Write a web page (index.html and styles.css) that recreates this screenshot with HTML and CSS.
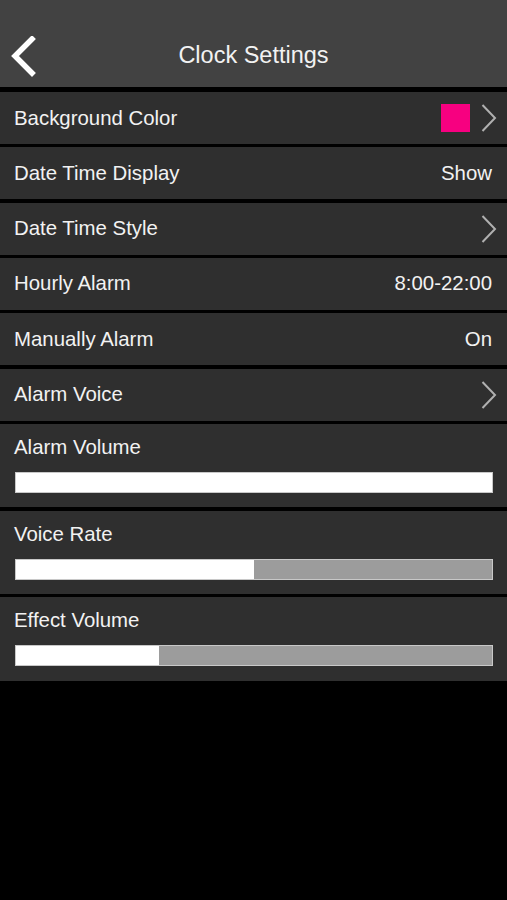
FILE: index.html
```html
<!DOCTYPE html>
<html lang="en">

<head>
  <meta charset="UTF-8" />
  <title>Clock Settings</title>

  <link rel="stylesheet" href="styles.css">
</head>

<body>
  <div class="header">
    <span class="back">
      <svg width="30" height="42" viewBox="0 0 30 42">
        <path d="M22 3 L5 20 L22 37" fill="none" stroke="#fff" stroke-width="5.5" stroke-linecap="square" />
      </svg>
    </span>
    <h1>Clock Settings</h1>
  </div>

  <div class="list">
    <div class="row">
      <span class="label">Background Color</span>
      <span class="swatch"></span>
      <svg class="chev" width="16" height="28" viewBox="0 0 16 28"><path d="M1.5 1 L14 14 L1.5 27" fill="none" stroke="#b0b0b0" stroke-width="2" /></svg>
    </div>
    <div class="row">
      <span class="label">Date Time Display</span>
      <span class="value">Show</span>
    </div>
    <div class="row">
      <span class="label">Date Time Style</span>
      <svg class="chev" width="16" height="28" viewBox="0 0 16 28"><path d="M1.5 1 L14 14 L1.5 27" fill="none" stroke="#b0b0b0" stroke-width="2" /></svg>
    </div>
    <div class="row">
      <span class="label">Hourly Alarm</span>
      <span class="value">8:00-22:00</span>
    </div>
    <div class="row">
      <span class="label">Manually Alarm</span>
      <span class="value">On</span>
    </div>
    <div class="row">
      <span class="label">Alarm Voice</span>
      <svg class="chev" width="16" height="28" viewBox="0 0 16 28"><path d="M1.5 1 L14 14 L1.5 27" fill="none" stroke="#b0b0b0" stroke-width="2" /></svg>
    </div>

    <div class="slider-row">
      <span class="label">Alarm Volume</span>
      <div class="track"><div class="fill" style="width: 100%;"></div></div>
    </div>
    <div class="slider-row">
      <span class="label">Voice Rate</span>
      <div class="track"><div class="fill" style="width: 50%;"></div></div>
    </div>
    <div class="slider-row">
      <span class="label">Effect Volume</span>
      <div class="track"><div class="fill" style="width: 30%;"></div></div>
    </div>
  </div>
</body>

</html>
```

FILE: styles.css
```css
body {
  margin: 0;
  background-color: #000;
  color: #f2f2f2;
  font-family: "Liberation Sans", Arial, sans-serif;
}

.header {
  height: 63px;
  padding-top: 24px;
  background-color: #424242;
  display: flex;
  align-items: center;
  justify-content: center;
  position: relative;
}

.header h1 {
  margin: 0;
  font-size: 23.5px;
  font-weight: normal;
}

.back {
  position: absolute;
  left: 10px;
  top: 36px;
}

.back svg {
  display: block;
}

.list {
  margin-top: 5px;
  display: flex;
  flex-direction: column;
  gap: 3.33px;
}

.row {
  height: 52px;
  background-color: #2f2f2f;
  display: flex;
  align-items: center;
  padding: 0 15px 0 14px;
  font-size: 20.4px;
}

.label {
  flex: 1;
}

.value {
  text-align: right;
}

.swatch {
  width: 29px;
  height: 28px;
  background-color: #f70080;
  margin-right: 11px;
}

.chev {
  display: block;
  margin-right: -5px;
}

.slider-row {
  height: 83.3px;
  background-color: #2f2f2f;
  padding: 0 14px 0 15px;
  box-sizing: border-box;
  font-size: 20.4px;
  display: flex;
  flex-direction: column;
}

.slider-row .label {
  flex: none;
  margin-top: 11px;
  margin-left: -1px;
  line-height: 24px;
}

.track {
  margin-top: 13px;
  height: 19px;
  background-color: #9c9c9c;
  border: 1px solid #c8c8c8;
  width: 476px;
}

.fill {
  height: 100%;
  background-color: #fff;
}
```
